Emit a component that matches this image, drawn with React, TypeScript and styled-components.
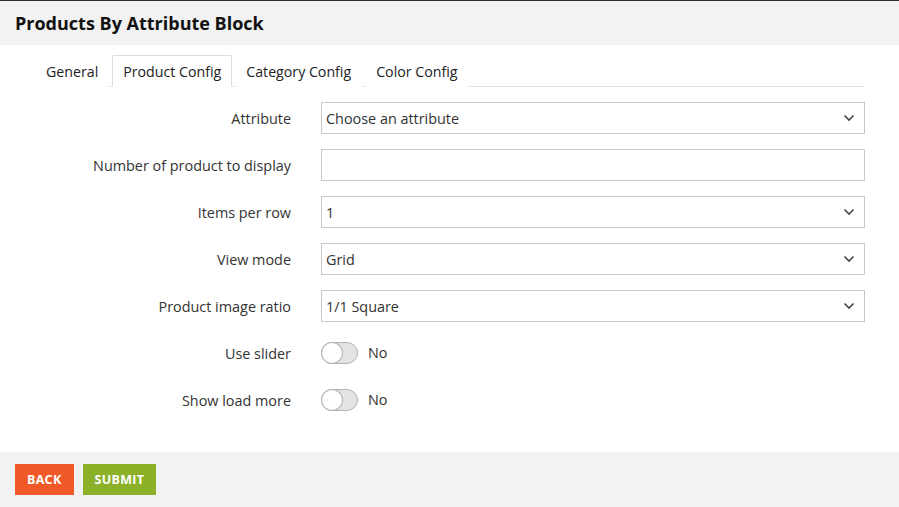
import React from 'react';
import styled, { createGlobalStyle } from 'styled-components';

const GlobalStyle = createGlobalStyle`
  html, body {
    margin: 0;
    padding: 0;
    background: #ffffff;
    font-family: 'Open Sans', 'Liberation Sans', sans-serif;
    color: #333333;
  }
`;

const tabs = ['General', 'Product Config', 'Category Config', 'Color Config'];

const fields = [
  { label: 'Attribute', type: 'select', value: 'Choose an attribute' },
  { label: 'Number of product to display', type: 'input', value: '' },
  { label: 'Items per row', type: 'select', value: '1' },
  { label: 'View mode', type: 'select', value: 'Grid' },
  { label: 'Product image ratio', type: 'select', value: '1/1 Square' },
  { label: 'Use slider', type: 'toggle', value: 'No' },
  { label: 'Show load more', type: 'toggle', value: 'No' },
];

const Chevron = () => (
  <svg width="12" height="8" viewBox="0 0 12 8" fill="none">
    <path d="M1.5 1.5 L6 6 L10.5 1.5" stroke="#444" strokeWidth="1.6" />
  </svg>
);

const App = () => {
  return (
    <>
      <GlobalStyle />
      <Page>
        <Header>
          <Title>Products By Attribute Block</Title>
        </Header>
        <Body>
          <TabBar>
            {tabs.map((t, i) => (
              <Tab key={t} $active={i === 1}>{t}</Tab>
            ))}
          </TabBar>
          <Form>
            {fields.map((f) => (
              <Row key={f.label}>
                <Label>{f.label}</Label>
                {f.type === 'select' && (
                  <Field>
                    <span>{f.value}</span>
                    <Chevron />
                  </Field>
                )}
                {f.type === 'input' && <Field />}
                {f.type === 'toggle' && (
                  <ToggleWrap>
                    <Switch>
                      <Knob />
                    </Switch>
                    <ToggleText>{f.value}</ToggleText>
                  </ToggleWrap>
                )}
              </Row>
            ))}
          </Form>
        </Body>
        <Footer>
          <Button $color="#f05a28">BACK</Button>
          <Button $color="#8cb128">SUBMIT</Button>
        </Footer>
      </Page>
    </>
  );
};

export default App;

const Page = styled.div`
  width: 899px;
  height: 507px;
  display: flex;
  flex-direction: column;
  border-top: 1px solid #2b2b2b;
  box-sizing: border-box;
`;

const Header = styled.div`
  background: #f2f2f2;
  height: 44px;
  display: flex;
  align-items: center;
  padding: 0 15px;
`;

const Title = styled.h1`
  margin: 0;
  font-size: 18px;
  font-weight: 700;
  color: #111111;
`;

const Body = styled.div`
  flex: 1;
  padding: 10px 34px 0 35px;
`;

const TabBar = styled.div`
  display: flex;
  border-bottom: 1px solid #e3e3e3;
  height: 31px;
`;

const Tab = styled.div<{ $active?: boolean }>`
  padding: 0 10px;
  margin-right: 3px;
  font-size: 14.2px;
  color: #222222;
  display: flex;
  align-items: center;
  height: 32px;
  box-sizing: border-box;
  border: 1px solid ${(p) => (p.$active ? '#dddddd' : 'transparent')};
  border-bottom-color: ${(p) => (p.$active ? '#ffffff' : 'transparent')};
  background: #ffffff;
  border-radius: 2px 2px 0 0;
`;

const Form = styled.div`
  display: flex;
  flex-direction: column;
  gap: 15px;
  padding-top: 15px;
`;

const Row = styled.div`
  display: grid;
  grid-template-columns: 256px 1fr;
  column-gap: 30px;
  align-items: center;
  height: 32px;
`;

const Label = styled.div`
  text-align: right;
  font-size: 14.4px;
  color: #333333;
`;

const Field = styled.div`
  height: 32px;
  box-sizing: border-box;
  border: 1px solid #c8c8c8;
  display: flex;
  align-items: center;
  justify-content: space-between;
  padding: 0 9px 0 4px;
  font-size: 14.4px;
  color: #333333;
`;

const ToggleWrap = styled.div`
  display: flex;
  align-items: center;
  gap: 10px;
`;

const Switch = styled.div`
  width: 37px;
  height: 22px;
  box-sizing: border-box;
  border: 1px solid #b5b5b5;
  border-radius: 11px;
  background: #e3e3e3;
  position: relative;
`;

const Knob = styled.div`
  position: absolute;
  left: 0;
  top: 0;
  width: 20px;
  height: 20px;
  border-radius: 50%;
  background: #ffffff;
  box-shadow: 0 0 0 1px #b5b5b5;
`;

const ToggleText = styled.span`
  font-size: 14.4px;
  color: #333333;
  margin-top: -2px;
`;

const Footer = styled.div`
  background: #f2f2f2;
  height: 55px;
  display: flex;
  align-items: center;
  gap: 9px;
  padding: 0 15px;
`;

const Button = styled.button<{ $color: string }>`
  background: ${(p) => p.$color};
  border: none;
  color: #ffffff;
  font-family: 'Open Sans', 'Liberation Sans', sans-serif;
  font-weight: 700;
  font-size: 12.5px;
  height: 31px;
  padding: 0 12px;
  letter-spacing: 0.3px;
`;
